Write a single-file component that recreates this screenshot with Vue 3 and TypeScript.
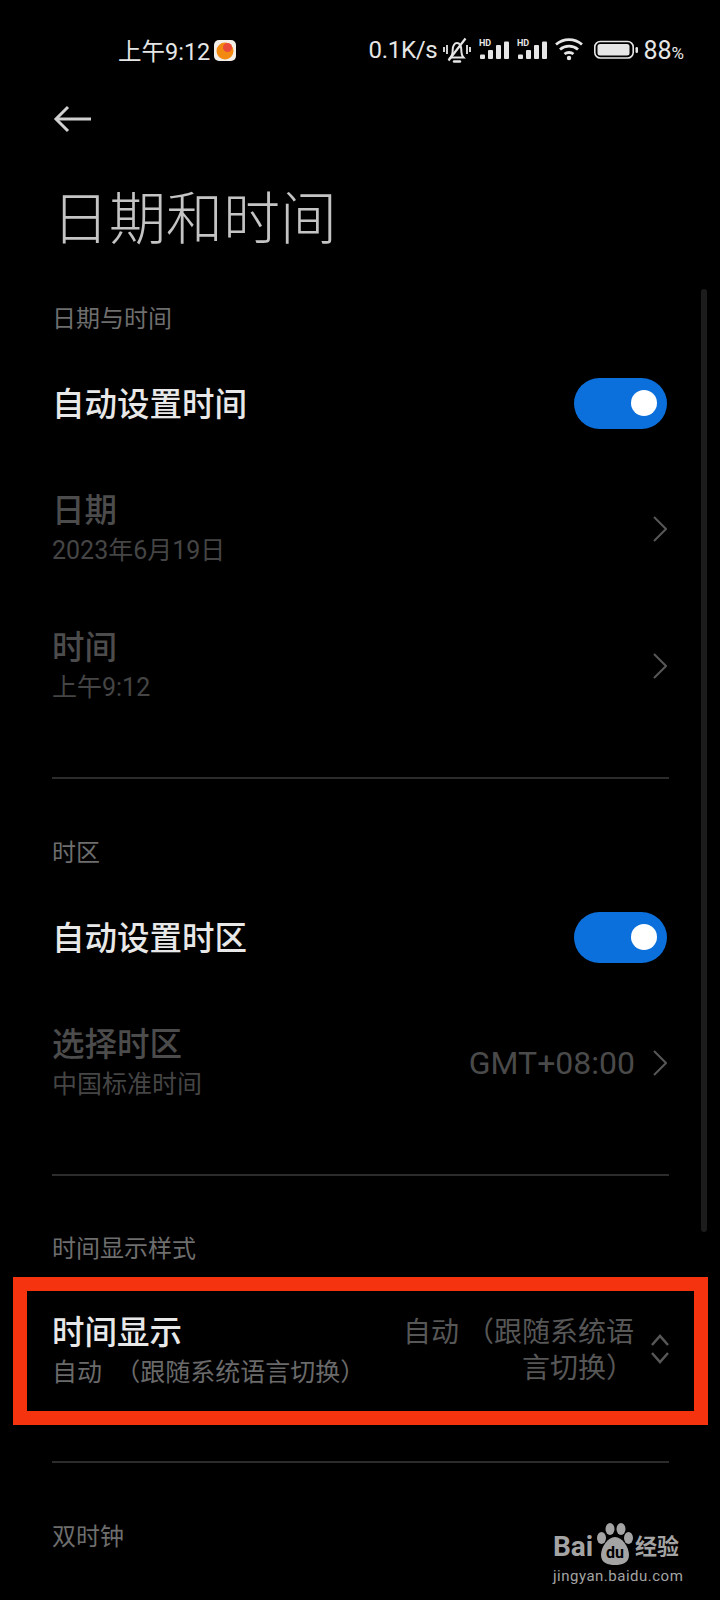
<template>
  <div class="screen">
    <header class="status">
      <div class="status-left">
        <span>上午9:12</span>
        <svg class="app-icon" width="22" height="21" viewBox="0 0 22 21">
          <rect width="22" height="21" rx="5" fill="#f3efe8" />
          <circle cx="11" cy="11" r="8.5" fill="#f28a12" />
          <circle cx="13.5" cy="7.5" r="4.5" fill="#ea4a3a" />
        </svg>
      </div>
      <div class="status-right">
        <span class="speed">0.1K/s</span>
        <svg class="bell" width="28" height="26" viewBox="0 0 28 26" fill="none" stroke="#e6e6e6" stroke-width="2">
          <path d="M7.5 20.5c1.500-1.500 2.200-3 2.200-8 0-3.500 1.800-6.500 4.300-6.500s4.300 3 4.300 6.500c0 5 .7 6.500 2.200 8z" />
          <path d="M11 24.500h6" stroke-width="2.400" stroke-linecap="round" />
          <path d="M5.500 23.500 22.500 1.500" stroke-width="2.200" />
          <path d="M1 10v5M4 8v9M24 8v9M27 10v5" stroke-width="1.800" />
        </svg>
        <svg v-for="n in 2" :key="n" class="signal" width="30" height="26" viewBox="0 0 30 26" fill="#e6e6e6">
          <text x="0" y="9" class="hd">HD</text>
          <rect x="1" y="17.500" width="5" height="4.500" rx="1" />
          <rect x="9" y="13" width="5" height="9" rx="1" />
          <rect x="17" y="8" width="5" height="14" rx="1" />
          <rect x="25" y="4.500" width="5" height="17.500" rx="1" />
        </svg>
        <svg class="wifi" width="28" height="26" viewBox="0 0 28 26" fill="none" stroke="#e6e6e6" stroke-width="2.800">
          <path d="M1 7.500c7.500-6.500 18.500-6.500 26 0" />
          <path d="M5 12.500c5-4.500 13-4.500 18 0" />
          <path d="M9.500 17c2.500-2 6.500-2 9 0" />
          <circle cx="14" cy="21" r="2.200" fill="#e6e6e6" stroke="none" />
        </svg>
        <svg class="battery-icon" width="44" height="26" viewBox="0 0 44 26" fill="none">
          <rect x="0.800" y="4.500" width="38.400" height="16.500" rx="5.500" stroke="#e6e6e6" stroke-width="1.600" />
          <rect x="3.500" y="7" width="32" height="11.500" rx="2.500" fill="#e6e6e6" />
          <rect x="41.500" y="10" width="2.500" height="6" rx="1.200" fill="#e6e6e6" />
        </svg>
        <span class="battery">88<small>%</small></span>
      </div>
    </header>

    <svg class="back" width="40" height="28" viewBox="0 0 40 28" fill="none" stroke="#d0d0d0" stroke-width="3">
      <path d="M38 14H3" />
      <path d="M15 2 3 14l12 12" />
    </svg>

    <h1 class="title">日期和时间</h1>

    <div class="scrollbar" />

    <main class="content">
      <section class="group first">
        <h2 class="group-title">日期与时间</h2>
        <div class="row toggle-row">
          <span class="label">自动设置时间</span>
          <span class="toggle"><i /></span>
        </div>
        <div class="row sub-row muted">
          <div>
            <div class="label">日期</div>
            <div class="sub">2023年6月19日</div>
          </div>
          <svg class="chevron" width="14" height="26" viewBox="0 0 14 26" fill="none">
            <path d="M1 1 13 13 1 25" />
          </svg>
        </div>
        <div class="row sub-row muted">
          <div>
            <div class="label">时间</div>
            <div class="sub">上午9:12</div>
          </div>
          <svg class="chevron" width="14" height="26" viewBox="0 0 14 26" fill="none">
            <path d="M1 1 13 13 1 25" />
          </svg>
        </div>
      </section>

      <section class="group">
        <h2 class="group-title">时区</h2>
        <div class="row toggle-row">
          <span class="label">自动设置时区</span>
          <span class="toggle"><i /></span>
        </div>
        <div class="row sub-row muted">
          <div>
            <div class="label">选择时区</div>
            <div class="sub">中国标准时间</div>
          </div>
          <div class="value">
            <span>GMT+08:00</span>
            <svg class="chevron" width="14" height="26" viewBox="0 0 14 26" fill="none">
              <path d="M1 1 13 13 1 25" />
            </svg>
          </div>
        </div>
      </section>

      <section class="group boxed">
        <h2 class="group-title">时间显示样式</h2>
        <div class="highlight">
          <div>
            <div class="label">时间显示</div>
            <div class="sub spaced">自动 （跟随系统语言切换）</div>
          </div>
          <div class="picker">
            <div class="picker-text">自动 （跟随系统语言切换）</div>
            <svg class="updown" width="18" height="30" viewBox="0 0 18 30" fill="none">
              <path d="M1 11 9 2l8 9" />
              <path d="M1 19l8 9 8-9" />
            </svg>
          </div>
        </div>
      </section>

      <section class="group last">
        <h2 class="group-title">双时钟</h2>
      </section>
    </main>

    <div class="watermark">
      <div class="wm-logo">
        <span class="wm-bai">Bai</span>
        <svg class="wm-paw" width="36" height="42" viewBox="0 0 36 42" fill="#a4a4a4">
          <ellipse cx="4.500" cy="15" rx="4.500" ry="6" />
          <ellipse cx="13" cy="6" rx="4.500" ry="6" />
          <ellipse cx="24" cy="6" rx="4.500" ry="6" />
          <ellipse cx="31.500" cy="15" rx="4.500" ry="6" />
          <path d="M18 14c7 0 14 10 14 18 0 8-7 10-14 10S4 40 4 32c0-8 7-18 14-18z" />
          <text x="18" y="35" class="wm-du">du</text>
        </svg>
        <span class="wm-cn">经验</span>
      </div>
      <div class="wm-url">jingyan.baidu.com</div>
    </div>
  </div>
</template>

<script setup lang="ts">
</script>

<style>
html,
body {
  background: #000;
}
</style>

<style scoped>
.screen {
  width: 720px;
  height: 1600px;
  overflow: hidden;
  position: relative;
  background: #000;
  color: #e8e8e8;
  font-family: "Roboto", "Noto Sans CJK SC", sans-serif;
}

.status {
  height: 50px;
  padding: 25px 36px 0 118px;
  display: flex;
  justify-content: space-between;
  align-items: center;
  font-size: 24px;
  color: #e6e6e6;
}
.status-left,
.status-right {
  display: flex;
  align-items: center;
}
.status-left {
  font-size: 23.5px;
}
.app-icon {
  margin-left: 4px;
}
.speed {
  letter-spacing: -0.3px;
}
.bell {
  margin-left: 6px;
}
.signal {
  margin-left: 8px;
}
.wifi {
  margin-left: 8px;
}
.battery-icon {
  margin-left: 11px;
}
.battery {
  margin-left: 5px;
  font-size: 25px;
}
.battery small {
  font-size: 17px;
}
.hd {
  font-size: 9px;
  font-weight: 700;
  font-family: "Roboto", sans-serif;
}

.back {
  display: block;
  margin: 30px 0 0 53px;
}

.title {
  margin: 51px 0 0 52px;
  font-size: 57px;
  line-height: 72px;
  font-weight: 300;
  color: #c4c4c4;
}

.scrollbar {
  position: absolute;
  left: 701px;
  top: 289px;
  width: 6px;
  height: 943px;
  border-radius: 3px;
  background: #1c1c1c;
}

.content {
  padding: 0 51px 0 52px;
}

.group {
  border-top: 2px solid #2c2c2c;
  padding: 57px 0 72px;
}
.group.first {
  border-top: none;
  padding-top: 46px;
}
.group.boxed {
  padding: 56px 0 36px;
}
.group.last {
  padding: 57px 0 0;
}

.group-title {
  margin: 0;
  font-size: 24px;
  line-height: 34px;
  font-weight: 400;
  color: #6e6e6e;
}

.row {
  display: flex;
  justify-content: space-between;
  align-items: center;
}
.toggle-row {
  height: 52px;
  margin-top: 43px;
}
.first .toggle-row {
  margin-bottom: 1px;
}
.sub-row {
  margin-top: 59px;
}

.label {
  font-size: 32.5px;
  line-height: 42px;
  font-weight: 500;
}
.sub {
  margin-top: 2px;
  font-size: 25px;
  line-height: 34px;
  color: #6a6a6a;
}
.sub.spaced {
  word-spacing: 7px;
}
.muted .label {
  color: #4c4c4c;
}
.muted .sub {
  color: #454545;
}

.toggle {
  width: 93px;
  height: 51px;
  margin: 0 2px 3px 0;
  border-radius: 26px;
  background: #0b70dc;
  position: relative;
}
.toggle i {
  position: absolute;
  right: 10px;
  top: 12px;
  width: 26px;
  height: 26px;
  border-radius: 50%;
  background: #fff;
}

.chevron {
  margin-right: 2px;
}
.chevron path {
  stroke: #575757;
  stroke-width: 2;
}
.value {
  display: flex;
  align-items: center;
  gap: 18px;
  font-size: 32px;
  color: #4a4a4a;
}

.highlight {
  display: flex;
  justify-content: space-between;
  align-items: center;
  height: 148px;
  box-sizing: border-box;
  margin: 11px -39px 0;
  padding: 0 25px;
  border: 14px solid #f5330f;
}
.picker {
  display: flex;
  align-items: center;
  gap: 17px;
}
.picker-text {
  width: 235px;
  font-size: 28px;
  line-height: 36px;
  color: #575757;
  text-align: right;
}
.updown {
  margin-bottom: 4px;
}
.updown path {
  stroke: #575757;
  stroke-width: 2.5;
}

.watermark {
  position: absolute;
  left: 553px;
  top: 1523px;
  color: #a4a4a4;
}
.wm-logo {
  display: flex;
  align-items: flex-end;
  height: 42px;
}
.wm-bai {
  width: 44px;
  font-size: 28px;
  line-height: 36px;
  font-weight: 700;
}
.wm-cn {
  margin-left: 2px;
  font-size: 22px;
  line-height: 36px;
  font-weight: 700;
}
.wm-du {
  font-size: 16px;
  font-weight: 700;
  fill: #000;
  text-anchor: middle;
}
.wm-url {
  margin-top: 1px;
  font-size: 15px;
  line-height: 20px;
  letter-spacing: 0.5px;
}
</style>
